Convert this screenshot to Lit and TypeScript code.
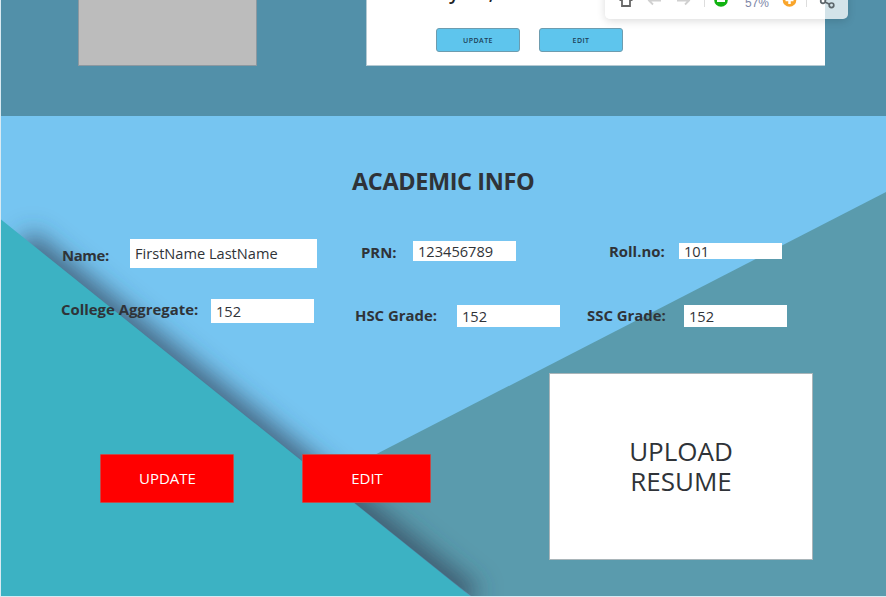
import { LitElement, html, css, svg } from "lit";
import { customElement } from "lit/decorators.js";

@customElement("app-root")
export class AppRoot extends LitElement {
  static styles = css`
    :host { display: block; width: 886px; height: 597px; overflow: hidden; position: relative; box-sizing: border-box;
      padding: 0 0 1px 1px; background: #d9eaf2; color: #2f3338; font-family: "Open Sans", "Noto Sans", sans-serif; }
    * { box-sizing: border-box; }
    .profile { height: 116px; background: #5290a9; display: flex; align-items: flex-start; padding-left: 77px; }
    .photo { width: 179px; height: 66px; background: #bcbcbc; border: 1px solid #8c98a0; border-top: 0; }
    .card { margin-left: 109px; width: 459px; height: 66px; background: #fff; border: 1px solid #b5cad3; border-top: 0; border-right: 0;
      display: flex; gap: 19px; padding: 28px 0 0 69px; position: relative; overflow: hidden; }
    .card button { width: 84px; height: 24px; background: #5ec5ed; border: 1px solid #6d9caf; border-radius: 3px; padding: 0;
      font: 600 7px "Open Sans", sans-serif; letter-spacing: .45px; color: #1d3f58; }
    .cutname { position: absolute; left: 82px; top: -21px; font-size: 19px; font-weight: 600; line-height: 26px; white-space: pre; color: #222; }
    .toolbar { position: absolute; left: 605px; top: -30px; width: 243px; height: 49px; border-radius: 5px;
      background: rgba(255,255,255,.75); box-shadow: 0 2px 8px rgba(0,0,0,.14); }
    .tools { display: block; margin-top: 30px; }
    .pct { font: 12px "Liberation Sans", sans-serif; fill: #8088a8; }
    .academic { height: 480px; background: #76c5f1; position: relative; }
    .bg { position: absolute; left: 0; top: 0; display: block; }
    .content { position: relative; }
    h1 { margin: 0; padding-top: 49px; padding-left: 351px; font-size: 23.5px; font-weight: 700; letter-spacing: -.4px; line-height: 33px; height: 123px; white-space: nowrap; }
    .row { display: grid; align-items: start; }
    .r1 { grid-template-columns: 299px 248px 1fr; padding-left: 61px; height: 60px; }
    .r2 { grid-template-columns: 294px 232px 1fr; padding-left: 60px; height: 74px; }
    .field { display: flex; align-items: flex-start; white-space: nowrap; line-height: 20px; }
    .label { font-weight: 700; font-size: 14.9px; flex: none; }
    .value { background: #fff; width: 103px; padding-left: 5px; flex: none; font-size: 14.6px; }
    .name .label { width: 68px; padding-top: 6px; letter-spacing: -.4px; } .name .value { width: 187px; height: 29px; line-height: 29px; }
    .prn { padding-top: 2px; } .prn .label { width: 52px; padding-top: 1px; } .prn .value { height: 20px; line-height: 21px; }
    .roll { padding-top: 4px; } .roll .label { width: 70px; margin-top: -2px; } .roll .value { height: 16px; line-height: 16px; }
    .agg .label { width: 150px; } .agg .value { height: 24px; line-height: 25px; }
    .hsc, .ssc { padding-top: 6px; } .hsc .value, .ssc .value { height: 22px; line-height: 23px; }
    .hsc .label { width: 102px; } .ssc .label { width: 97px; }
    .actions { display: flex; align-items: flex-start; padding-left: 99px; }
    .red { margin-top: 81px; height: 49px; background: #f00; border: 1px solid #c34a4a; border-radius: 1px; padding: 0 0 2px 1px;
      color: #fff; font: 15px "Open Sans", sans-serif; }
    .up { width: 134px; margin-right: 68px; } .ed { width: 129px; margin-right: 118px; }
    .upload { width: 264px; height: 187px; background: #fff; border: 1px solid #a9b5b9; display: flex; align-items: center; justify-content: center;
      text-align: center; font-size: 26px; line-height: 30px; padding-bottom: 2px; }
    .upload div { height: 30px; }
  `;

  private field(cls: string, label: string, value: string) {
    return html`<div class="field ${cls}"><span class="label">${label}</span><span class="value">${value}</span></div>`;
  }

  render() {
    return html`
      <section class="profile">
        <div class="photo"></div>
        <div class="card"><span class="cutname">y      ,</span><button>UPDATE</button><button>EDIT</button></div>
      </section>
      <section class="academic">
        <svg class="bg" width="885" height="480">
          <defs>
            <filter id="soft" x="-20%" y="-20%" width="140%" height="140%"><feGaussianBlur stdDeviation="12" /></filter>
          </defs>
          <polygon points="885,76 325,364 470,480 885,480" fill="#5a9bad" />
          <polygon points="30,114 480,474 450,500 10,145" fill="#34445a" fill-opacity=".72" filter="url(#soft)" />
          <polygon points="0,103.500 0,480 469,480" fill="#3cb2c3" />
        </svg>
        <div class="content">
          <h1>ACADEMIC INFO</h1>
          <div class="row r1">
            ${this.field("name", "Name:", "FirstName LastName")}
            ${this.field("prn", "PRN:", "123456789")}
            ${this.field("roll", "Roll.no:", "101")}
          </div>
          <div class="row r2">
            ${this.field("agg", "College Aggregate:", "152")}
            ${this.field("hsc", "HSC Grade:", "152")}
            ${this.field("ssc", "SSC Grade:", "152")}
          </div>
          <div class="actions">
            <button class="red up">UPDATE</button>
            <button class="red ed">EDIT</button>
            <div class="upload"><section><div>UPLOAD</div><div>RESUME</div></section></div>
          </div>
        </div>
      </section>
      <div class="toolbar">
        <svg class="tools" width="243" height="19">
          ${svg`
          <path d="M14.500 0H17V6H25V0H27.500" fill="none" stroke="#666" stroke-width="1.800" />
          <path d="M56 0H44M48 -3L44 0L48 4M72 0H84M80 -3L84 0L80 4" fill="none" stroke="#d0d0d0" stroke-width="1.800" transform="translate(0 .5)" />
          <path d="M99.500 0V7M201.500 0V7" stroke="#ddd" />
          <circle cx="116" cy="0" r="6.800" fill="#12b312" /><rect x="112" y="-1" width="8" height="3" fill="#fff" />
          <text class="pct" x="140" y="7">57%</text>
          <circle cx="184.500" cy="0" r="6.800" fill="#f9a52b" /><path d="M180.500 0H188.500M184.500 -4V4" stroke="#fff" stroke-width="2.500" />
          <g fill="none" stroke="#5d666b" stroke-width="1.700"><circle cx="218" cy="1" r="2.300" /><circle cx="226.500" cy="5.300" r="2.300" /><path d="M220 2L224.500 4.200M220 0L224 -2" /></g>`}
        </svg>
      </div>
    `;
  }
}
